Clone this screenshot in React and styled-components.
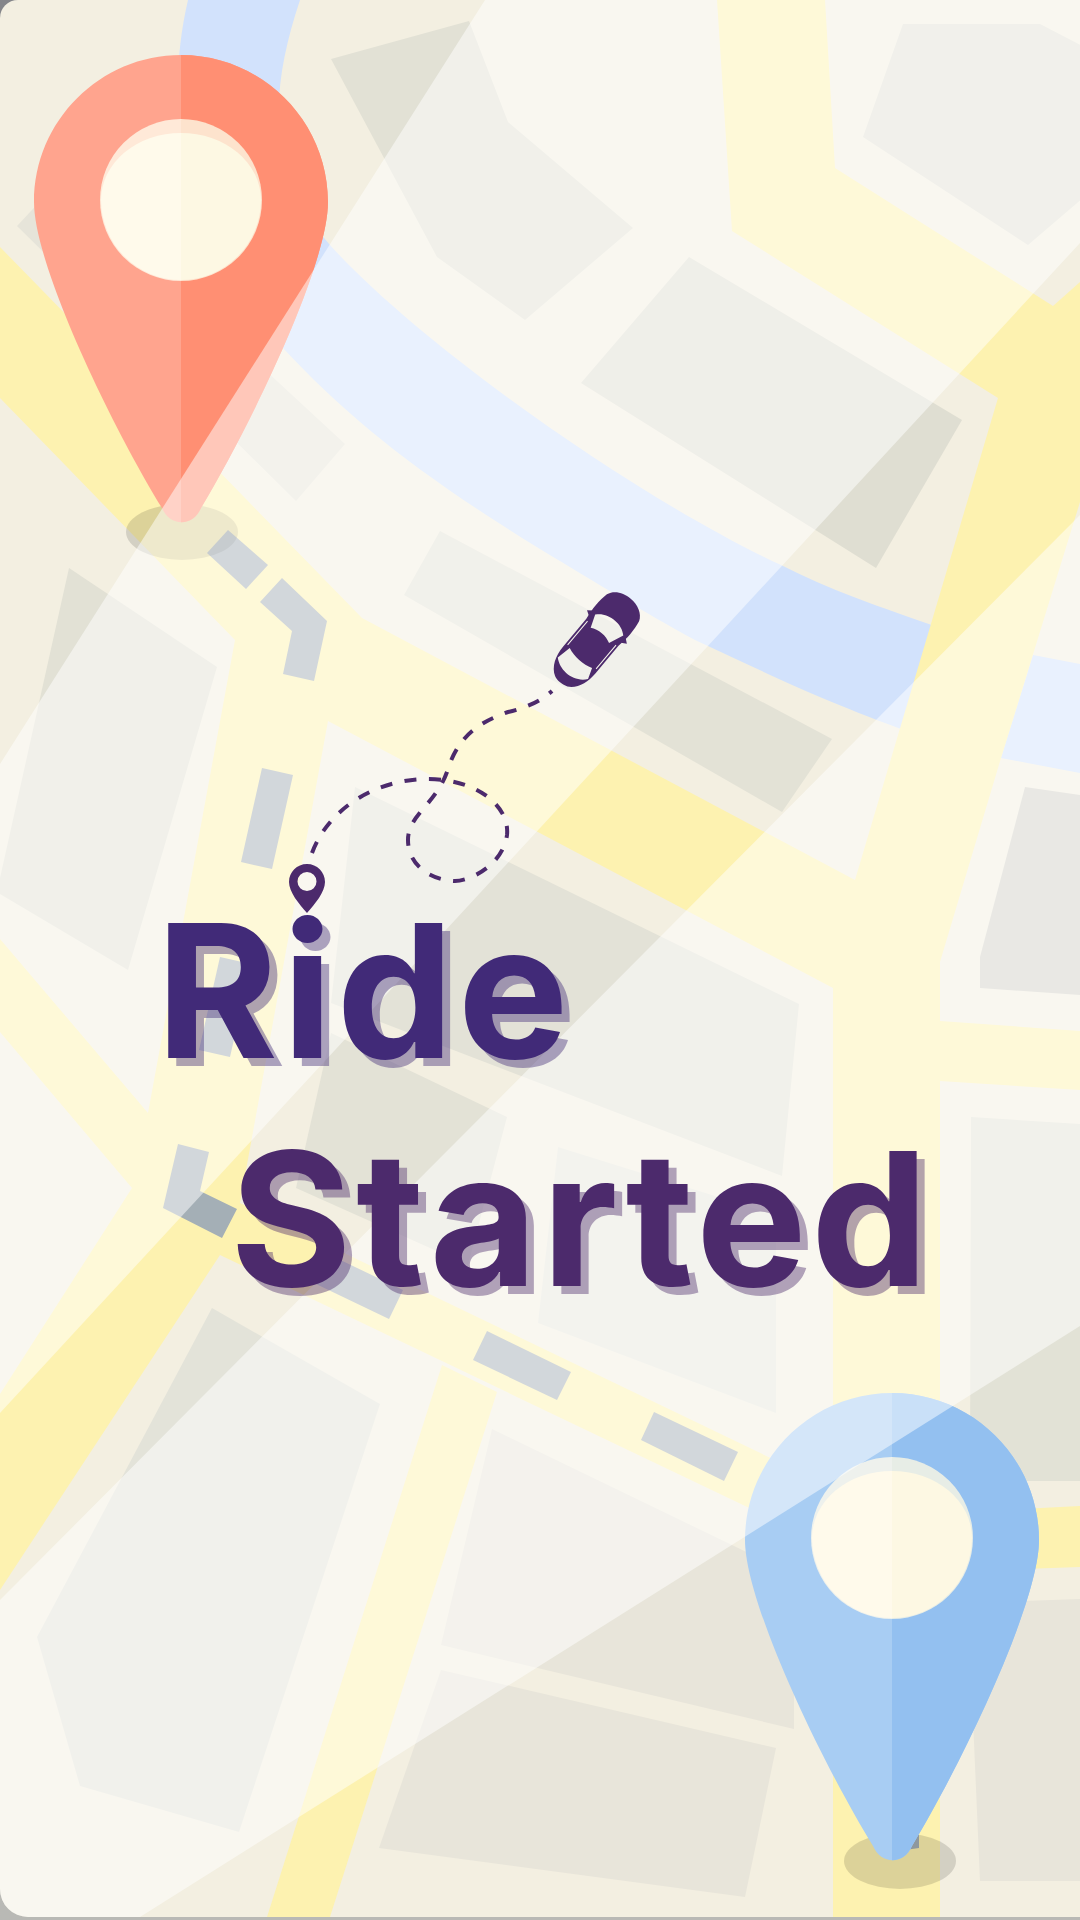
import React from "react";
import styled, { createGlobalStyle } from "styled-components";

const GlobalStyle = createGlobalStyle`
  html, body { margin: 0; padding: 0; height: 1920px; }
  html { background: #b9b9b5; }
  body {
    background: linear-gradient(#85868a 0 40px, #b9b9b5 40px);
    font-family: Inter, "Liberation Sans", sans-serif;
  }
`;

const Page = styled.div`
  position: relative;
  width: 1080px;
  height: 1917px;
  overflow: hidden;
  background: #f3efe1;
  border-radius: 18px 0 0 28px;
`;

const MapCanvas = styled.svg`
  position: absolute;
  top: 0;
  left: 0;
  width: 1080px;
  height: 1917px;
`;

const Water = styled.path`fill: #d2e2fc;`;
const WaterPart = styled.polygon`fill: #d2e2fc;`;
const Road = styled.polygon`fill: #fdf2b0;`;
const Block = styled.polygon`fill: ${p => p.$tone};`;
const Dash = styled.polygon`fill: #a4afb6;`;
const PinShadow = styled.ellipse`fill: rgba(0, 0, 0, 0.13);`;
const PinBody = styled.path`fill: ${p => p.$fill};`;
const PinRing = styled.circle`fill: ${p => p.$fill}; opacity: 0.8;`;
const PinCream = styled.path`fill: ${p => p.$fill};`;
const Veil = styled.polygon`fill: rgba(255, 255, 255, 0.5);`;
const Trail = styled.path`
  fill: none;
  stroke: #4c2a6c;
  stroke-width: 4;
  stroke-dasharray: 12 12.5;
`;
const CarBody = styled.path`fill: #4c2a6c; fill-rule: evenodd;`;
const CarSlit = styled.path`fill: none; stroke: #f6f4ec; stroke-width: 1;`;
const SmallPin = styled.path`fill: #4c2a6c; fill-rule: evenodd;`;

const Title = styled.h1`
  position: relative;
  margin: 0;
  padding-top: 877px;
  font-size: 186px;
  line-height: 228px;
  font-weight: 700;
`;

const TitleLine = styled.span`
  display: block;
  margin-left: ${p => p.$indent}px;
  letter-spacing: ${p => p.$tracking}px;
  color: ${p => p.$color};
  text-shadow: 8px 8px 0 ${p => p.$shade};
`;

const BLOCKS = [
  { tone: "#e2e1d5", points: "331,59 469,21 508,122 633,228 525,320 437,257" },
  { tone: "#e2e1d6", points: "903,24 1040,24 1090,50 1090,192 1028,245 863,137" },
  { tone: "#dfded2", points: "689,257 962,420 876,568 581,383" },
  { tone: "#e6e4d9", points: "17,226 60,180 345,444 296,501" },
  { tone: "#e2e1d5", points: "69,568 217,667 128,970 0,894 0,878" },
  { tone: "#e3e2d6", points: "440,531 832,739 782,812 404,595" },
  { tone: "#e3e2d7", points: "355,787 799,1004 782,1176 331,1003" },
  { tone: "#e3e2d6", points: "331,1033 507,1117 468,1265 296,1188" },
  { tone: "#e7e7dd", points: "558,1147 776,1215 776,1413 538,1323" },
  { tone: "#e3e3d9", points: "212,1308 380,1404 239,1832 80,1786 37,1637" },
  { tone: "#e8e5da", points: "492,1429 794,1575 794,1729 441,1645" },
  { tone: "#e8e5da", points: "441,1670 776,1748 745,1897 379,1848" },
  { tone: "#e2e2d6", points: "971,1117 1080,1124 1080,1481 970,1481" },
  { tone: "#e8e5da", points: "968,1603 1080,1599 1080,1881 980,1881" },
  { tone: "#d3d1c9", points: "1025,787 1080,795 1080,995 980,988 980,957" },
];

const DASHES = [
  "228,530 268,565 246,589 207,553",
  "282,578 327,621 314,681 283,674 292,631 260,602",
  "262,768 293,775 272,869 241,862",
  "220,957 251,964 230,1057 199,1050",
  "178,1144 209,1152 200,1191 237,1209 222,1238 163,1208",
  "330,1255 403,1290 389,1319 316,1284",
  "487,1331 571,1372 557,1400 473,1360",
  "654,1412 738,1452 724,1481 641,1440",
  "905,1830 919,1835 919,1848 905,1850",
];

const PIN_OUTLINE =
  "M0,0 C81,0 147,66 147,147 C147,210 70,370 20,453 C12,472 -11,472 -19,453 C-70,370 -147,210 -147,147 C-147,66 -81,0 0,0 Z";
const PIN_CREAM = "M-80,145 A80,67 0 0 1 80,145 A80,80 0 0 1 -80,145 Z";

const PinFace = ({ body, cream }) => (
  <>
    <PinBody d={PIN_OUTLINE} $fill={body} />
    <PinRing cx="0" cy="145" r="81" $fill={cream} />
    <PinCream d={PIN_CREAM} $fill={cream} />
  </>
);

const MapPin = ({ x, y, left, right, clipId }) => (
  <g transform={`translate(${x} ${y})`}>
    <clipPath id={clipId}>
      <rect x="0" y="-5" width="160" height="490" />
    </clipPath>
    <PinFace body={left} cream="#fffaeb" />
    <g clipPath={`url(#${clipId})`}>
      <PinFace body={right} cream="#fdf8e3" />
    </g>
  </g>
);

const Car = () => (
  <g transform="translate(596 640) rotate(40)">
    <CarBody d="M0,-54 C9,-54 18,-50 21,-42 C23,-32 23,-22 21,-10 L21,26 C21,38 17,49 8,54 C2,56 -4,56 -8,54 C-17,49 -21,38 -21,26 L-21,-10 C-23,-22 -23,-32 -21,-42 C-18,-50 -9,-54 0,-54 Z M-17,-19 C-9,-29 9,-30 18,-21 L12,-6 C5,-10 -5,-10 -12,-6 Z M-15,23 C-6,27 6,27 15,24 L19,35 C10,47 -8,47 -18,38 Z" />
    <CarBody d="M-21,-14 L-26,-17 L-21,-21 Z M21,-14 L26,-17 L21,-21 Z" />
    <CarSlit d="M-18.6,-9 L-18.6,22 M18.6,-9 L18.6,22" />
  </g>
);

const App = () => (
  <Page>
    <GlobalStyle />
    <MapCanvas viewBox="0 0 1080 1917">
      <Water d="M300,0 C270,90 265,170 330,245 C420,345 640,500 781,565 C830,590 880,607 940,628 L910,732 C820,700 760,670 695,640 C640,610 600,585 540,549 C420,475 350,420 282,347 C190,240 160,120 188,0 Z" />
      <WaterPart points="1033,655 1080,664 1080,773 1001,758" />
      <Road points="717,0 825,0 835,168 1053,306 1080,282 1080,502 1001,758 940,962 940,1021 1080,1031 1080,1090 940,1081 940,1917 833,1917 833,988 328,721 240,1203 833,1488 833,1548 220,1255 0,1590 0,1394 132,1188 0,1032 0,939 148,1113 235,640 0,398 0,247 362,618 855,880 998,398 732,231" />
      <Road points="497,1392 330,1917 267,1917 442,1365" />
      <Road points="940,1513 1080,1506 1080,1567 940,1572" />
      {BLOCKS.map(block => (
        <Block key={block.points} points={block.points} $tone={block.tone} />
      ))}
      {DASHES.map(points => (
        <Dash key={points} points={points} />
      ))}
      <PinShadow cx="182" cy="532" rx="56" ry="28" />
      <PinShadow cx="900" cy="1861" rx="56" ry="28" />
      <MapPin x={181} y={55} left="#ffa48e" right="#ff8f73" clipId="redHalf" />
      <MapPin x={892} y={1393} left="#a8cdf3" right="#93c0f0" clipId="blueHalf" />
      <Veil points="485,0 1080,0 1080,243 0,1413 0,764" />
      <Veil points="1080,515 1080,1326 140,1917 0,1917 0,1600" />
      <Trail d="M312,853 C330,805 380,779 428,779 C475,779 510,805 507,835 C503,865 470,881 455,881 C430,880 408,865 408,840 C408,815 435,805 447,772 C458,735 480,722 508,712 C525,708 540,702 552,691" />
      <SmallPin d="M307,864 C317,864 325,872 325,882 C325,892 315,904 307,913 C299,904 289,892 289,882 C289,872 297,864 307,864 Z M307,872 A9.5,9.5 0 1 0 307,891 A9.5,9.5 0 1 0 307,872 Z" />
      <Car />
    </MapCanvas>
    <Title>
      <TitleLine $indent={156} $tracking={4} $color="#412a78" $shade="rgba(65, 42, 120, 0.42)">Ride</TitleLine>
      <TitleLine $indent={230} $tracking={4.3} $color="#4c2a6c" $shade="rgba(76, 42, 108, 0.42)">Started</TitleLine>
    </Title>
  </Page>
);

export default App;
